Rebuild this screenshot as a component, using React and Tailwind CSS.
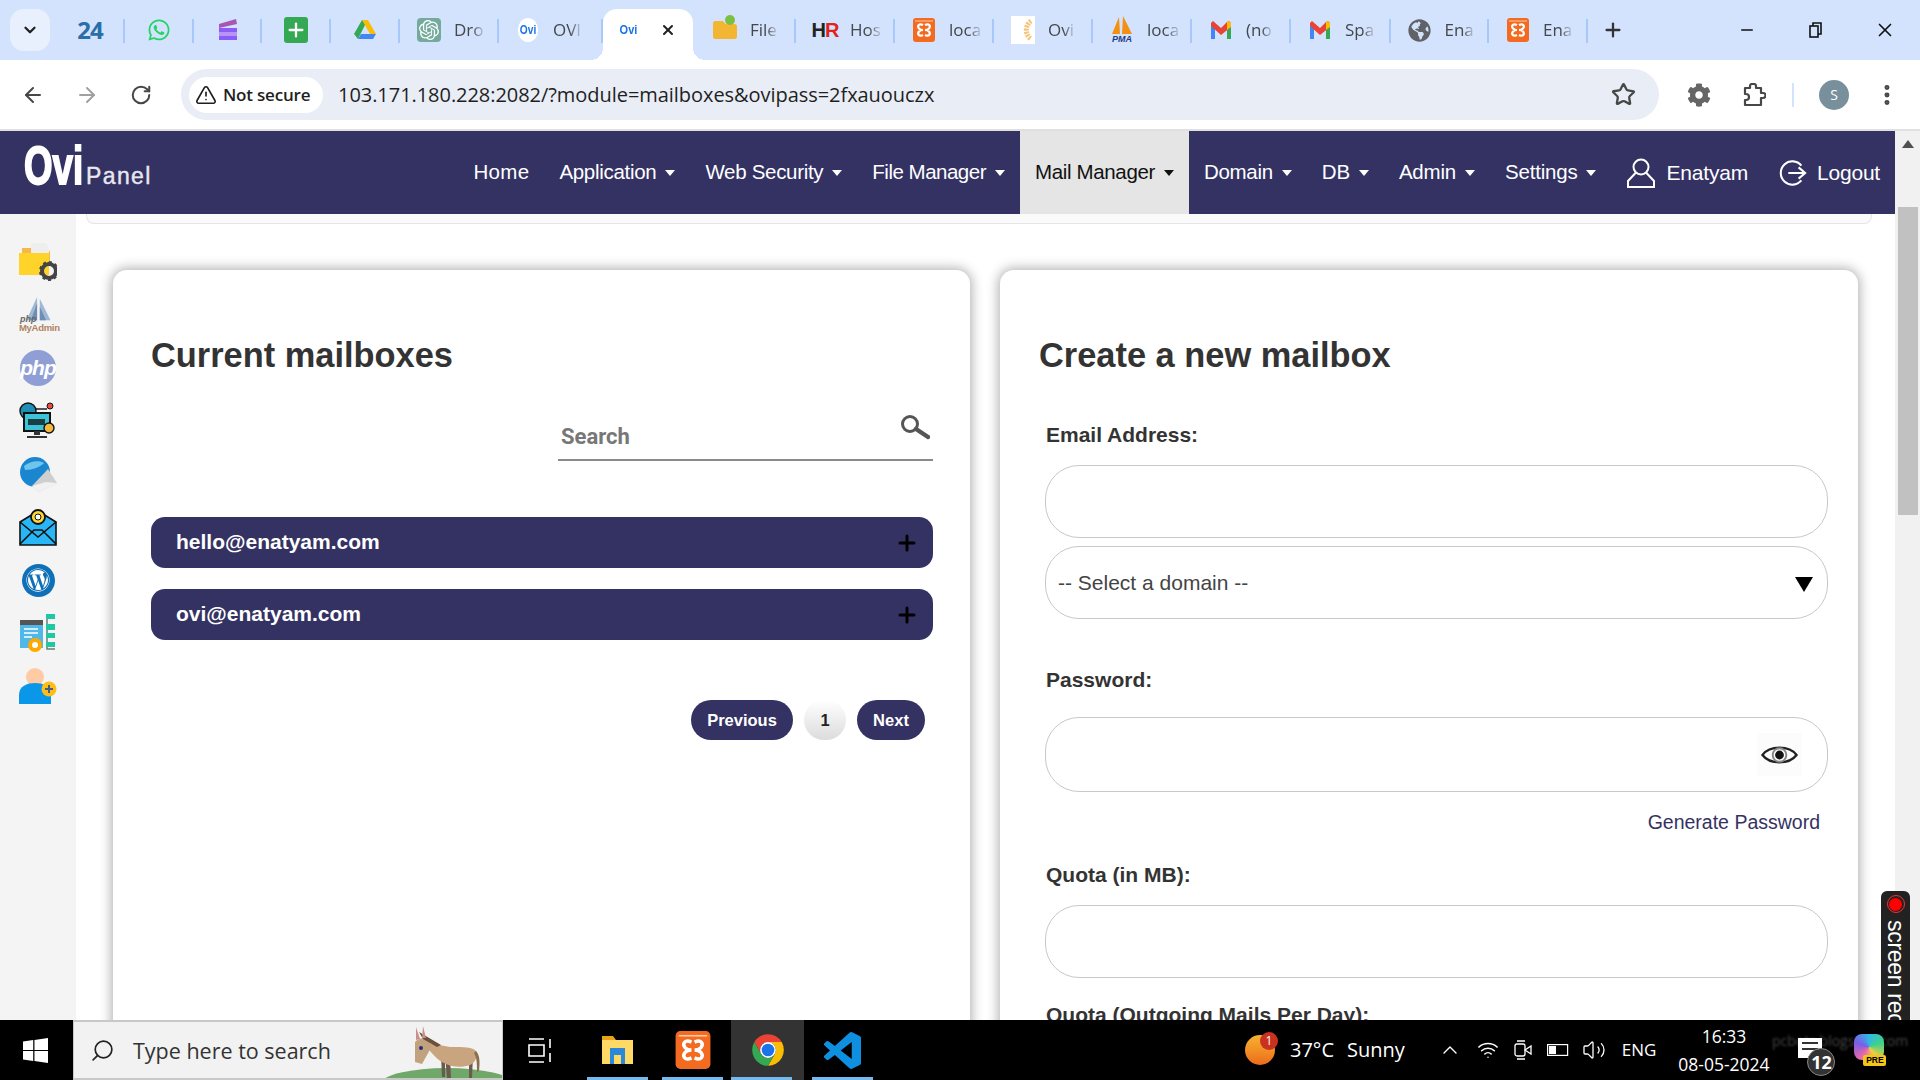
import React from "react";
import { ArrowLeft, ArrowRight, RotateCw, Star, EllipsisVertical, Plus, ChevronDown, Minus, X, TriangleAlert, Search, ChevronUp, Wifi, Volume2 } from "lucide-react";
import { FaWhatsapp, FaWordpress, FaCog, FaGlobeAmericas, FaFolder } from "react-icons/fa";
import { SiOpenai } from "react-icons/si";

const ui = "font-['Open_Sans','Noto_Sans',sans-serif]";

function XamppIcon({ className }) {
  return (
    <svg viewBox="0 0 24 24" className={className}>
      <rect x="1" y="0" width="22" height="24" rx="3" fill="#f26b21" />
      <path d="M3 3h18" stroke="#ffc9a3" strokeWidth="1" />
      <path
        d="M11 7C7 5 5 8 7 10.5c1 1 2.5 1.5 4 1.5-1.5 0-3 .5-4 1.5C5 16 7 19 11 17M13 7c4-2 6 1 4 3.500-1 1-2.500 1.500-4 1.500 1.500 0 3 .5 4 1.500 2 2.500 0 5.500-4 3.500"
        fill="none"
        stroke="white"
        strokeWidth="2.2"
      />
    </svg>
  );
}

function GmailIcon() {
  return (
    <svg viewBox="0 0 24 24" className="w-[24px] h-[24px]">
      <path fill="#4285f4" d="M2 5h4v16H2z" />
      <path fill="#34a853" d="M18 9h4v12h-4z" />
      <path fill="#ea4335" d="M2 5l2-2 8 7 6-6 2-1 2 2v4l-10 8L2 8z" />
      <path fill="#fbbc04" d="M18 4l2-1 2 2v4l-4 3z" />
    </svg>
  );
}

function Tab({ width, icon, title }) {
  return (
    <div className={`${width} h-[51px] pb-[9px] flex items-center relative shrink-0 ${title ? "pl-[17px]" : "pl-[22px]"}`}>
      <span className="w-[24px] h-[24px] flex items-center justify-center shrink-0">{icon}</span>
      {title && (
        <span className="ml-[13px] whitespace-nowrap text-[17px] text-[#45474a] [mask-image:linear-gradient(to_right,black_60%,rgba(0,0,0,0.15))]">
          {title}
        </span>
      )}
      <span className="absolute right-0 top-[10px] h-[24px] w-[2px] bg-[#a8c7fa]" />
    </div>
  );
}

function OviFavicon() {
  return (
    <span className="w-[24px] h-[24px] rounded-full bg-white flex items-center justify-center text-[#1a73e8] text-[12px] font-bold font-['Liberation_Sans',sans-serif] [transform:scaleX(0.85)]">
      Ovi
    </span>
  );
}

function TabStrip() {
  return (
    <div className={`h-[60px] bg-[#d3e3fd] flex items-end pl-[10px] ${ui}`}>
      <div className="w-[40px] h-[42px] mb-[9px] rounded-[14px] bg-[#e8f0fe] flex items-center justify-center">
        <ChevronDown size={18} strokeWidth={3} className="text-[#1f1f1f]" />
      </div>
      <div className="w-[6px]" />
      <Tab width="w-[69px]" icon={<span className="text-[24px] font-bold text-[#2a6ea8] tracking-[-1px]">24</span>} />
      <Tab width="w-[68.5px]" icon={<FaWhatsapp size={24} className="text-[#25d366]" />} />
      <Tab
        width="w-[68.5px]"
        icon={
          <svg viewBox="0 0 24 24" className="w-[24px] h-[24px]">
            <path fill="#8b5cf6" d="M3 10h18v12H3z" />
            <path fill="#b794f6" d="M3 14h18v4H3z" />
            <path fill="#a855b5" d="M3 6l17-5 1 5-18 4z" />
          </svg>
        }
      />
      <Tab
        width="w-[69px]"
        icon={
          <span className="w-[24px] h-[26px] rounded-[3px] bg-[#34a853] flex items-center justify-center">
            <Plus size={22} strokeWidth={2.5} className="text-white" />
          </span>
        }
      />
      <Tab
        width="w-[69px]"
        icon={
          <svg viewBox="0 0 24 24" className="w-[24px] h-[24px]">
            <path fill="#fbbc04" d="M9 2h6l8 14h-6z" />
            <path fill="#34a853" d="M9 2l3 5-7 14-4-5z" />
            <path fill="#4285f4" d="M8 16h15l-3 5H5z" />
          </svg>
        }
      />
      <Tab
        width="w-[99px]"
        title="Dro"
        icon={
          <span className="w-[24px] h-[24px] rounded-[4px] bg-[#74aa9c] flex items-center justify-center">
            <SiOpenai size={20} className="text-white" />
          </span>
        }
      />
      <Tab width="w-[104px]" title="OVI" icon={<OviFavicon />} />
      <div className="w-[90px] h-[51px] pb-[9px] bg-white rounded-t-[14px] relative flex items-center justify-between pl-[15px] pr-[17px] shrink-0">
        <span className="absolute bottom-0 left-[-12px] w-[12px] h-[12px] bg-[radial-gradient(circle_at_0_0,transparent_12px,white_12px)]" />
        <span className="absolute bottom-0 right-[-12px] w-[12px] h-[12px] bg-[radial-gradient(circle_at_100%_0,transparent_12px,white_12px)]" />
        <span className="text-[#1a73e8] text-[13px] font-bold font-['Liberation_Sans',sans-serif] [transform:scaleX(0.85)]">Ovi</span>
        <X size={16} strokeWidth={3} className="text-[#1f1f1f]" />
      </div>
      <div className="w-[3px]" />
      <Tab
        width="w-[100px]"
        title="File"
        icon={
          <span className="relative flex w-[24px] h-[24px] items-center justify-center">
            <FaFolder size={24} className="text-[#f2b632]" />
            <span className="absolute right-[2px] top-[-3px] w-[10px] h-[10px] rounded-full bg-[#7ac143]" />
          </span>
        }
      />
      <Tab
        width="w-[99px]"
        title="Hos"
        icon={
          <span className="font-['Liberation_Sans',sans-serif] text-[20px] font-bold tracking-[-1px] text-[#222]">
            H<span className="text-[#e2231a]">R</span>
          </span>
        }
      />
      <Tab width="w-[99px]" title="loca" icon={<XamppIcon className="w-[24px] h-[26px]" />} />
      <Tab
        width="w-[99px]"
        title="Ovi"
        icon={
          <svg viewBox="0 0 24 24" className="w-[24px] h-[28px] bg-white">
            <path d="M20 3a11 11 0 0 0 0 18" fill="none" stroke="#f5c27a" strokeWidth="5" strokeDasharray="2 1" />
          </svg>
        }
      />
      <Tab
        width="w-[99px]"
        title="loca"
        icon={
          <span className="relative w-[24px] h-[28px] flex flex-col items-center">
            <svg viewBox="0 0 24 18" className="w-[24px] h-[18px]">
              <path fill="#f29111" d="M2 18L9 1l1 17zM12 18l1-18 9 18z" />
            </svg>
            <span className="text-[9px] leading-[10px] font-bold italic text-[#1f3c88] font-['Liberation_Sans',sans-serif]">PMA</span>
          </span>
        }
      />
      <Tab width="w-[99px]" title="(no" icon={<GmailIcon />} />
      <Tab width="w-[99.5px]" title="Spa" icon={<GmailIcon />} />
      <Tab width="w-[98.5px]" title="Ena" icon={<FaGlobeAmericas size={23} className="text-[#5f6368]" />} />
      <Tab width="w-[99px]" title="Ena" icon={<XamppIcon className="w-[24px] h-[26px]" />} />
      <div className="w-[50px] h-[51px] pb-[9px] flex items-center justify-center">
        <Plus size={22} strokeWidth={2.5} className="text-[#333]" />
      </div>
      <div className="flex-1 h-[60px] flex items-center justify-end">
        <Minus size={18} strokeWidth={2} className="text-[#111] mr-[52px]" />
        <svg viewBox="0 0 16 16" className="w-[16px] h-[16px] mr-[50px]" fill="none" stroke="#111" strokeWidth="1.6">
          <rect x="2" y="4" width="8" height="11" />
          <path d="M5 4V1h8v11h-3" />
        </svg>
        <X size={22} strokeWidth={1.8} className="text-[#111] mr-[24px]" />
      </div>
    </div>
  );
}

function Toolbar() {
  return (
    <div className={`h-[69px] bg-white rounded-t-[12px] flex items-center ${ui}`}>
      <ArrowLeft size={24} strokeWidth={2} className="text-[#474747] ml-[21px]" />
      <ArrowRight size={24} strokeWidth={2} className="text-[#a0a0a0] ml-[30px]" />
      <RotateCw size={22} strokeWidth={2.2} className="text-[#474747] ml-[31px]" />
      <div className="ml-[29px] w-[1478px] h-[51px] rounded-full bg-[#e9edf6] flex items-center pl-[8px]">
        <div className="w-[134px] h-[36px] rounded-full bg-white flex items-center pl-[6px] gap-[6px]">
          <TriangleAlert size={22} strokeWidth={1.8} className="text-[#1f1f1f]" />
          <span className="text-[17px] font-semibold text-[#1f1f1f] whitespace-nowrap tracking-[-0.2px]">Not secure</span>
        </div>
        <span className="ml-[15px] text-[20px] tracking-[-0.05px] text-[#1f1f1f] whitespace-nowrap">103.171.180.228:2082/?module=mailboxes&amp;ovipass=2fxauouczx</span>
        <Star size={25} strokeWidth={2.2} className="text-[#474747] ml-auto mr-[23px]" />
      </div>
      <FaCog size={24} className="text-[#666] ml-[28px]" />
      <svg viewBox="0 0 24 24" className="w-[24px] h-[24px] ml-[31px]" fill="none" stroke="#474747" strokeWidth="2.2" strokeLinejoin="round">
        <path d="M3 5h5V3a2 2 0 0 1 2-2h2a2 2 0 0 1 2 2v2h5v5h2a2 2 0 0 1 0 5h-2v7H3v-5h1a2.500 2.500 0 0 0 0-6H3z" />
      </svg>
      <span className="ml-[26px] w-[2px] h-[24px] bg-[#d3e3fd]" />
      <span className="ml-[25px] w-[30px] h-[30px] rounded-full bg-[#78909c] text-white text-[14px] flex items-center justify-center">S</span>
      <EllipsisVertical size={26} strokeWidth={2.6} className="text-[#474747] ml-[25px]" />
    </div>
  );
}

function NavItem({ label, caret, active, track }) {
  return (
    <div className={`h-full flex items-center px-[15px] gap-[9px] ${active ? "bg-[#e5e5e5] text-[#111]" : "text-white"}`}>
      <span className={track}>{label}</span>
      {caret && (
        <span className={`w-0 h-0 border-x-[5.5px] border-t-[6px] border-x-transparent ${active ? "border-t-[#111]" : "border-t-white"}`} />
      )}
    </div>
  );
}

function NavBar() {
  return (
    <nav className="h-[83px] bg-[#343263] flex items-stretch font-['Liberation_Sans',sans-serif] text-[20.5px]">
      <div className="ml-[24px] flex items-end h-[56px] leading-none">
        <span className="w-[62px] text-white text-[54px] font-bold origin-left [transform:scaleX(0.68)] [-webkit-text-stroke:2px_white] leading-[44px] whitespace-nowrap">Ovi</span>
        <span className="text-[#e8e8f0] text-[23px] tracking-[1.4px] [-webkit-text-stroke:0.4px_#e8e8f0] leading-[24px] -mb-[1px]">Panel</span>
      </div>
      <div className="ml-auto flex items-stretch">
        <NavItem label="Home" track="tracking-[0.3px]" />
        <NavItem label="Application" caret track="tracking-[-0.3px]" />
        <NavItem label="Web Security" caret track="tracking-[-0.3px]" />
        <NavItem label="File Manager" caret track="tracking-[-0.5px]" />
        <NavItem label="Mail Manager" caret active track="tracking-[-0.35px]" />
        <NavItem label="Domain" caret track="tracking-[-0.3px]" />
        <NavItem label="DB" caret track="tracking-[-0.2px]" />
        <NavItem label="Admin" caret track="tracking-[-0.2px]" />
        <NavItem label="Settings" caret track="tracking-[-0.2px]" />
        <div className="flex items-center text-white pl-[15px] pr-[15px] text-[21px] tracking-[-0.2px]">
          <svg viewBox="0 0 30 30" className="w-[30px] h-[30px] mr-[10px]" fill="none" stroke="white" strokeWidth="2">
            <circle cx="15" cy="9" r="7.5" />
            <path d="M10 14.5L2 23v6h26v-6l-8-8.5" />
          </svg>
          Enatyam
        </div>
        <div className="flex items-center text-white pl-[16px] pr-[15px] text-[21px] tracking-[-0.2px]">
          <svg viewBox="0 0 30 30" className="w-[28px] h-[28px] mr-[10px]" fill="none" stroke="white" strokeWidth="2.2">
            <path d="M24 7A12.5 12.5 0 1 0 24 23" />
            <path d="M10 15h18M21 9l7 6-7 6" />
          </svg>
          Logout
        </div>
      </div>
    </nav>
  );
}

function SideIcon({ children }) {
  return <div className="w-[38px] h-[38px] flex items-center justify-center mb-[15px]">{children}</div>;
}

function Sidebar() {
  return (
    <aside className="w-[76px] shrink-0 bg-[#f4f4f4] flex flex-col items-center pt-[29px]">
      <SideIcon>
        <svg viewBox="0 0 38 38" className="w-[38px] h-[38px]">
          <path fill="#f7b84b" d="M3 5h12l3 3h13v12H3z" />
          <path fill="#eee" d="M12 0h14l4 5v14H12z" />
          <path fill="#ffd42a" d="M0 10h30v22H0z" />
          <circle cx="30" cy="28" r="7" fill="none" stroke="#444" strokeWidth="4" />
          <circle cx="30" cy="28" r="9" fill="none" stroke="#444" strokeWidth="2" strokeDasharray="3 3" />
        </svg>
      </SideIcon>
      <SideIcon>
        <div className="relative w-[38px] h-[38px]">
          <svg viewBox="0 0 38 38" className="w-[38px] h-[34px] absolute top-0 left-0">
            <path fill="#9fb9d4" d="M18 1v26H6zM21 3l12 24H21z" />
            <path fill="#6e8fb3" d="M18 8v19h-7zM21 12l7 15h-7z" />
          </svg>
          <span className="absolute bottom-[10px] left-[1px] text-[9px] leading-[9px] font-bold italic text-[#666] font-['Liberation_Sans',sans-serif]">php</span>
          <span className="absolute bottom-[1px] left-0 text-[9.5px] leading-[10px] font-bold text-[#b0835f] font-['Liberation_Sans',sans-serif] whitespace-nowrap tracking-[-0.3px]">
            MyAdmin
          </span>
        </div>
      </SideIcon>
      <SideIcon>
        <span className="w-[36px] h-[36px] rounded-full bg-[#8f9fd6] flex items-center justify-center text-white text-[21px] font-bold italic font-['Liberation_Sans',sans-serif] tracking-[-1px]">
          php
        </span>
      </SideIcon>
      <SideIcon>
        <svg viewBox="0 0 38 38" className="w-[38px] h-[38px]">
          <circle cx="9" cy="9" r="8" fill="#1d8fb5" stroke="#111" strokeWidth="1.4" />
          <circle cx="31" cy="4" r="3" fill="#e74c3c" stroke="#111" />
          <path d="M16 7h12" stroke="#111" strokeWidth="1.4" />
          <rect x="5" y="11" width="26" height="18" fill="#3bc4d8" stroke="#111" strokeWidth="2" />
          <path d="M15 29h6v4h-6zM8 34h20v2H8z" fill="#333" />
          <circle cx="30" cy="26" r="5" fill="#f5b942" stroke="#111" strokeWidth="1.4" />
          <path d="M9 17h17v6H9z" fill="#111" opacity=".75" />
        </svg>
      </SideIcon>
      <SideIcon>
        <svg viewBox="0 0 38 38" className="w-[38px] h-[38px]">
          <circle cx="16" cy="17" r="15" fill="#1a86d0" />
          <path d="M5 11c6-5 15-6 20-3-4 4-11 7-19 7z" fill="#6fc5f0" />
          <path fill="#cfcfcf" d="M13 31L29 14l9 14-18 9z" />
          <path fill="#f1f1f1" d="M13 31l14-4 11 1-18 9z" />
        </svg>
      </SideIcon>
      <SideIcon>
        <svg viewBox="0 0 38 38" className="w-[38px] h-[38px]">
          <path d="M1 14L19 3l18 11v23H1z" fill="#29b6f6" stroke="#111" strokeWidth="1.6" />
          <path d="M1 36l14-14h8l14 14M1 14l18 15 18-15" fill="none" stroke="#111" strokeWidth="1.6" />
          <circle cx="19" cy="9" r="7" fill="#fdd835" stroke="#111" strokeWidth="1.8" />
          <circle cx="19" cy="9" r="3" fill="#fff" stroke="#111" />
        </svg>
      </SideIcon>
      <SideIcon>
        <span className="w-[33px] h-[33px] rounded-full bg-[#0f6fb7] flex items-center justify-center">
          <FaWordpress size={24} className="text-white" />
        </span>
      </SideIcon>
      <SideIcon>
        <svg viewBox="0 0 38 38" className="w-[38px] h-[38px]">
          <path d="M1 6h23v28H1z" fill="#4fb8e8" />
          <path d="M1 6h23v5H1z" fill="#555" />
          <path d="M5 15h14M5 19h14M5 23h8" stroke="#fff" strokeWidth="1.6" />
          <path d="M28 5v30h8" fill="none" stroke="#777" strokeWidth="1.5" />
          <path d="M27 0h9v5h-9zM27 10h9v6h-9zM27 19h9v5h-9zM27 28h9v5h-9z" fill="#1fc7a5" />
          <circle cx="16" cy="31" r="7" fill="#ffa800" />
          <circle cx="16" cy="31" r="3" fill="#fff" />
        </svg>
      </SideIcon>
      <SideIcon>
        <svg viewBox="0 0 38 38" className="w-[38px] h-[38px]">
          <circle cx="16" cy="10" r="9" fill="#ffcba4" />
          <path d="M0 37V28c0-9 8-12 16-12s16 3 16 12v9z" fill="#0a97ea" />
          <circle cx="30" cy="22" r="7.5" fill="#fdbf16" />
          <path d="M26 22h8M30 18v8" stroke="#4b5a8f" strokeWidth="2" />
        </svg>
      </SideIcon>
    </aside>
  );
}

function FieldLabel({ children, className }) {
  return <div className={`pl-[1px] text-[21px] leading-[24px] font-bold text-[#333] ${className}`}>{children}</div>;
}

const inputClass = "block w-full rounded-[34px] border border-[#c8c8c8] bg-white outline-none";

function MailBar({ email }) {
  return (
    <div className="h-[51px] rounded-[14px] bg-[#343263] flex items-center justify-between pl-[25px] pr-[14px]">
      <span className="text-white font-bold text-[21px] pb-[2px]">{email}</span>
      <Plus size={24} strokeWidth={3} className="text-black" />
    </div>
  );
}

function PageBtn({ children, width }) {
  return <button className={`${width} h-[40px] rounded-full bg-[#343263] text-white font-bold text-[16.5px]`}>{children}</button>;
}

function CurrentMailboxes() {
  return (
    <section className="w-[857px] shrink-0 h-[900px] bg-white rounded-[14px] shadow-[0_0_12px_2px_rgba(0,0,0,0.3)] pl-[38px] pr-[37px] pt-[65px]">
      <h2 className="text-[34.4px] leading-[40px] font-bold text-[#333]">Current mailboxes</h2>
      <div className="mt-[40px] flex justify-end">
        <div className="w-[375px] h-[46px] border-b-[2px] border-[#8a8a8a] flex justify-between pl-[3px] pr-[3px]">
          <span className="pt-[10px] leading-[24px] text-[22px] font-bold text-[#777] font-['Roboto',sans-serif]">Search</span>
          <svg viewBox="0 0 30 26" className="w-[30px] h-[26px]" fill="none" stroke="#555">
            <circle cx="10" cy="9" r="7.5" strokeWidth="3" />
            <path d="M16 14l12 8" strokeWidth="4.5" strokeLinecap="round" />
          </svg>
        </div>
      </div>
      <div className="mt-[56px] flex flex-col gap-[21px]">
        <MailBar email="hello@enatyam.com" />
        <MailBar email="ovi@enatyam.com" />
      </div>
      <div className="mt-[60px] flex justify-end items-center gap-[11px] pr-[8px]">
        <PageBtn width="w-[102px]">Previous</PageBtn>
        <span className="w-[42px] h-[40px] rounded-full bg-gradient-to-b from-white to-[#dcdcdc] flex items-center justify-center font-bold text-[16.5px] text-[#222]">1</span>
        <PageBtn width="w-[68px]">Next</PageBtn>
      </div>
    </section>
  );
}

function CreateMailbox() {
  return (
    <section className="w-[858px] shrink-0 h-[900px] bg-white rounded-[14px] shadow-[0_0_12px_2px_rgba(0,0,0,0.3)] pl-[45px] pr-[30px] pt-[65px]">
      <h2 className="-ml-[6px] text-[34.4px] leading-[40px] font-bold text-[#333]">Create a new mailbox</h2>
      <FieldLabel className="mt-[48px]">Email Address:</FieldLabel>
      <input className={`${inputClass} mt-[18px] h-[73px]`} />
      <div className="relative mt-[8px]">
        <select className={`${inputClass} h-[73px] pl-[12px] text-[21px] text-[#444] appearance-none`}>
          <option>-- Select a domain --</option>
        </select>
        <span className="absolute right-[15px] top-[31px] w-0 h-0 border-x-[9px] border-t-[15px] border-x-transparent border-t-black" />
      </div>
      <FieldLabel className="mt-[49px]">Password:</FieldLabel>
      <div className="relative mt-[25px]">
        <input className={`${inputClass} h-[75px]`} />
        <span className="absolute right-[26px] top-[16px] w-[45px] h-[43px] bg-[#fcfcfc] flex items-center justify-center">
          <svg viewBox="0 0 38 22" className="w-[37px] h-[22px]" fill="none" stroke="#222" strokeWidth="2.4">
            <path d="M1.5 11C9 1 29 1 36.5 11 29 21 9 21 1.5 11z" />
            <circle cx="19" cy="11" r="7" stroke="#888" strokeWidth="2" />
            <circle cx="19" cy="11" r="4.5" fill="#111" stroke="none" />
          </svg>
        </span>
      </div>
      <div className="mt-[18px] pr-[8px] text-right text-[19.5px] leading-[24px] text-[#343263]">Generate Password</div>
      <FieldLabel className="mt-[29px]">Quota (in MB):</FieldLabel>
      <input className={`${inputClass} mt-[18px] h-[73px]`} />
      <FieldLabel className="mt-[25px]">Quota (Outgoing Mails Per Day):</FieldLabel>
    </section>
  );
}

function Scrollbar() {
  return (
    <div className="w-[25px] shrink-0 bg-[#f1f1f1] flex flex-col items-center pt-[9px]">
      <span className="w-0 h-0 border-x-[6px] border-b-[8px] border-x-transparent border-b-[#505050]" />
      <span className="mt-[59px] w-[20px] h-[308px] bg-[#c1c1c1]" />
    </div>
  );
}

function Donkey() {
  return (
    <svg viewBox="0 0 71 56" className="absolute left-[337px] top-[3px] w-[71px] h-[56px]">
      <path fill="#6d5a4e" d="M34 30l5 0 1 23h-4zM58 30l4 0-1 23h-3zM30 30l4 0 0 22h-3z" />
      <path fill="#c9a57f" d="M14 20c8-4 18 2 28 2 10 0 20 0 23 4 2 8-2 12-6 14-8 3-20 2-26-2-8-4-12-10-19-18z" />
      <path fill="#c2a27e" d="M4 17c3-4 10-5 14-2l3 6-10 18-7-2z" />
      <path fill="#6a4f3a" d="M8 7l22 13-4 2L12 14z" />
      <path fill="#c9908a" d="M5 2l4 12-4 1zM12 1l3 12-4 0z" />
      <circle cx="10" cy="23" r="2" fill="#22307a" />
      <path d="M65 26c4 4 4 12 3 20l-2 1c0-8 0-14-3-19z" fill="#8a6f4e" />
    </svg>
  );
}

function TaskApp({ children, gap, active }) {
  return (
    <div className={`h-[60px] flex items-center justify-center relative ${gap} ${active ? "w-[73px] bg-[#333]" : "w-[61px]"}`}>
      {children}
      <span className="absolute bottom-0 left-0 h-[3px] w-[61px] bg-[#76b9ed]" />
    </div>
  );
}

function Taskbar() {
  return (
    <div className={`h-[60px] bg-black text-white flex items-center relative ${ui}`}>
      <svg viewBox="0 0 24 24" className="w-[25px] h-[25px] ml-[23px]" fill="white">
        <path d="M0 3.4L9.8 2v9.5H0zM11 1.9L24 0v11.5H11zM0 12.5h9.8V22L0 20.6zM11 12.5h13V24l-13-1.9z" />
      </svg>
      <div className="ml-[25px] w-[430px] h-[60px] bg-[#f2f2f2] border-y-[2px] border-x border-[#c8c8c8] relative flex items-center overflow-hidden">
        <Search size={25} strokeWidth={1.6} className="text-[#222] ml-[16px] -scale-x-100" />
        <span className="ml-[18px] pt-[2px] text-[21.5px] text-[#333] whitespace-nowrap">Type here to search</span>
        <span className="absolute right-[-10px] bottom-[-20px] w-[130px] h-[30px] rounded-[50%] bg-[#6fa868]" />
        <Donkey />
      </div>
      <svg viewBox="0 0 25 25" className="w-[25px] h-[25px] ml-[25px]" fill="none" stroke="white" strokeWidth="1.6">
        <path d="M1 1h15M1 24h15M1 7h15v11H1zM22 1v9M22 15v9" />
      </svg>
      <TaskApp gap="ml-[34px]">
        <svg viewBox="0 0 31 28" className="w-[31px] h-[28px]">
          <path fill="#e8a317" d="M0 0h11l3 4H0z" />
          <path fill="#ffd966" d="M0 4h31v24H0z" />
          <path fill="#2b88d8" d="M8 12h15v16h-4v-9h-7v9H8z" />
        </svg>
      </TaskApp>
      <TaskApp gap="ml-[14px] mr-[8px]">
        <XamppIcon className="w-[38px] h-[38px]" />
      </TaskApp>
      <TaskApp active>
        <svg viewBox="0 0 24 24" className="w-[38px] h-[38px]">
          <path fill="#ea4335" d="M3.34 7A10 10 0 0 1 20.66 7H12A5 5 0 0 0 7.67 14.5Z" />
          <path fill="#fbbc04" d="M20.66 7A10 10 0 0 1 12 22L16.33 14.5A5 5 0 0 0 12 7Z" />
          <path fill="#34a853" d="M12 22A10 10 0 0 1 3.34 7L7.67 14.5A5 5 0 0 0 16.33 14.5Z" />
          <circle cx="12" cy="12" r="5" fill="#fff" />
          <circle cx="12" cy="12" r="4" fill="#1a73e8" />
        </svg>
      </TaskApp>
      <TaskApp gap="ml-[8px]">
        <svg viewBox="0 0 24 24" className="w-[37px] h-[37px]">
          <path fill="#0f8fe0" d="M23.15 2.587L18.21.21a1.494 1.494 0 0 0-1.705.29l-9.46 8.63-4.12-3.128a.999.999 0 0 0-1.276.057L.327 7.261A1 1 0 0 0 .326 8.74L3.899 12 .326 15.26a1 1 0 0 0 .001 1.479L1.65 17.94a.999.999 0 0 0 1.276.057l4.12-3.128 9.46 8.63a1.492 1.492 0 0 0 1.704.29l4.942-2.377A1.5 1.5 0 0 0 24 20.06V3.939a1.5 1.5 0 0 0-.85-1.352zm-5.146 14.861L10.826 12l7.178-5.448v10.896z" />
        </svg>
      </TaskApp>
      <div className="ml-[372px] relative w-[30px] h-[30px]">
        <span className="block w-[30px] h-[30px] rounded-[50%] bg-gradient-to-b from-[#f5b32e] to-[#ec6a1c]" />
        <span className="absolute -right-[3px] -top-[3px] w-[18px] h-[18px] rounded-full bg-[#c8321f] text-[12px] flex items-center justify-center">1</span>
      </div>
      <span className="ml-[15px] text-[20px] whitespace-nowrap">37°C</span>
      <span className="ml-[13px] text-[20px] whitespace-nowrap">Sunny</span>
      <ChevronUp size={24} strokeWidth={1.4} className="ml-[33px]" />
      <Wifi size={22} strokeWidth={1.6} className="ml-[15px]" />
      <svg viewBox="0 0 18 24" className="w-[18px] h-[24px] ml-[15px]" fill="none" stroke="white" strokeWidth="1.3">
        <rect x="1" y="6" width="10" height="12" rx="2" />
        <path d="M11 12l6-4v8zM3 3h8M3 21h8" />
      </svg>
      <svg viewBox="0 0 22 12" className="w-[22px] h-[12px] ml-[15px]" fill="none" stroke="white" strokeWidth="1.2">
        <rect x=".6" y=".6" width="20" height="10.8" />
        <rect x="2" y="2" width="7" height="8" fill="white" stroke="none" />
      </svg>
      <Volume2 size={24} strokeWidth={1.3} className="ml-[13px]" />
      <span className="ml-[16px] text-[17px] whitespace-nowrap">ENG</span>
      <div className="ml-[20px] w-[95px] flex flex-col items-center justify-between text-[17.5px] h-[54px] leading-[26px] whitespace-nowrap">
        <span>16:33</span>
        <span>08-05-2024</span>
      </div>
      <span className="absolute left-[1772px] top-[10px] text-[14px] text-[#444] blur-[1px] whitespace-nowrap">pcbots.blogspot.com</span>
      <div className="ml-[27px] relative w-[24px] h-[20px] bg-white -mt-[4px]">
        <span className="absolute left-[4px] right-[4px] top-[4px] h-[8px] border-y-2 border-[#333]" />
        <span className="absolute left-[9px] top-[10px] w-[28px] h-[28px] rounded-full bg-[#333] border border-[#888] text-[18px] font-bold text-white flex items-center justify-center">12</span>
      </div>
      <div className="ml-[32px] relative w-[32px] h-[32px]">
        <span className="block w-[30px] h-[26px] rounded-[8px] bg-[conic-gradient(#2fb8e6,#3fd18a,#f0d040,#e86aa8,#7b5ce6,#2fb8e6)]" />
        <span className="absolute left-[9px] bottom-0 w-[23px] h-[11px] bg-[#f5c518] rounded-[2px] text-[8.5px] font-bold text-black leading-[11px] text-center font-['Liberation_Sans',sans-serif]">PRE</span>
      </div>
    </div>
  );
}

export default function App() {
  return (
    <div className="relative w-[1920px] h-[1080px] flex flex-col overflow-hidden bg-white font-['Liberation_Sans',sans-serif]">
      <TabStrip />
      <Toolbar />
      <div className="h-[2px] bg-[#e0e0e0]" />
      <div className="flex-1 min-h-0 flex overflow-hidden">
        <div className="flex-1 min-w-0 flex flex-col">
          <NavBar />
          <div className="flex-1 min-h-0 flex overflow-hidden">
            <Sidebar />
            <main className="flex-1 min-w-0 overflow-hidden">
              <div className="ml-[10px] mr-[23px] h-[10px] bg-[#fafafa] border border-t-0 border-[#e5e5e5] rounded-b-[8px]" />
              <div className="mt-[46px] ml-[37px] flex gap-[30px]">
                <CurrentMailboxes />
                <CreateMailbox />
              </div>
            </main>
          </div>
        </div>
        <Scrollbar />
      </div>
      <div className="absolute right-[10px] top-[891px] w-[29px] h-[129px] bg-[#222] rounded-t-[6px] overflow-hidden flex flex-col items-center pt-[4px]">
        <span className="w-[18px] h-[18px] rounded-full border border-[#e33] flex items-center justify-center shrink-0">
          <span className="w-[13px] h-[13px] rounded-full bg-[#f00]" />
        </span>
        <span className="mt-[7px] text-white text-[23px] leading-[29px] tracking-[-0.3px] whitespace-nowrap [writing-mode:vertical-rl]">screen rec</span>
      </div>
      <Taskbar />
    </div>
  );
}
